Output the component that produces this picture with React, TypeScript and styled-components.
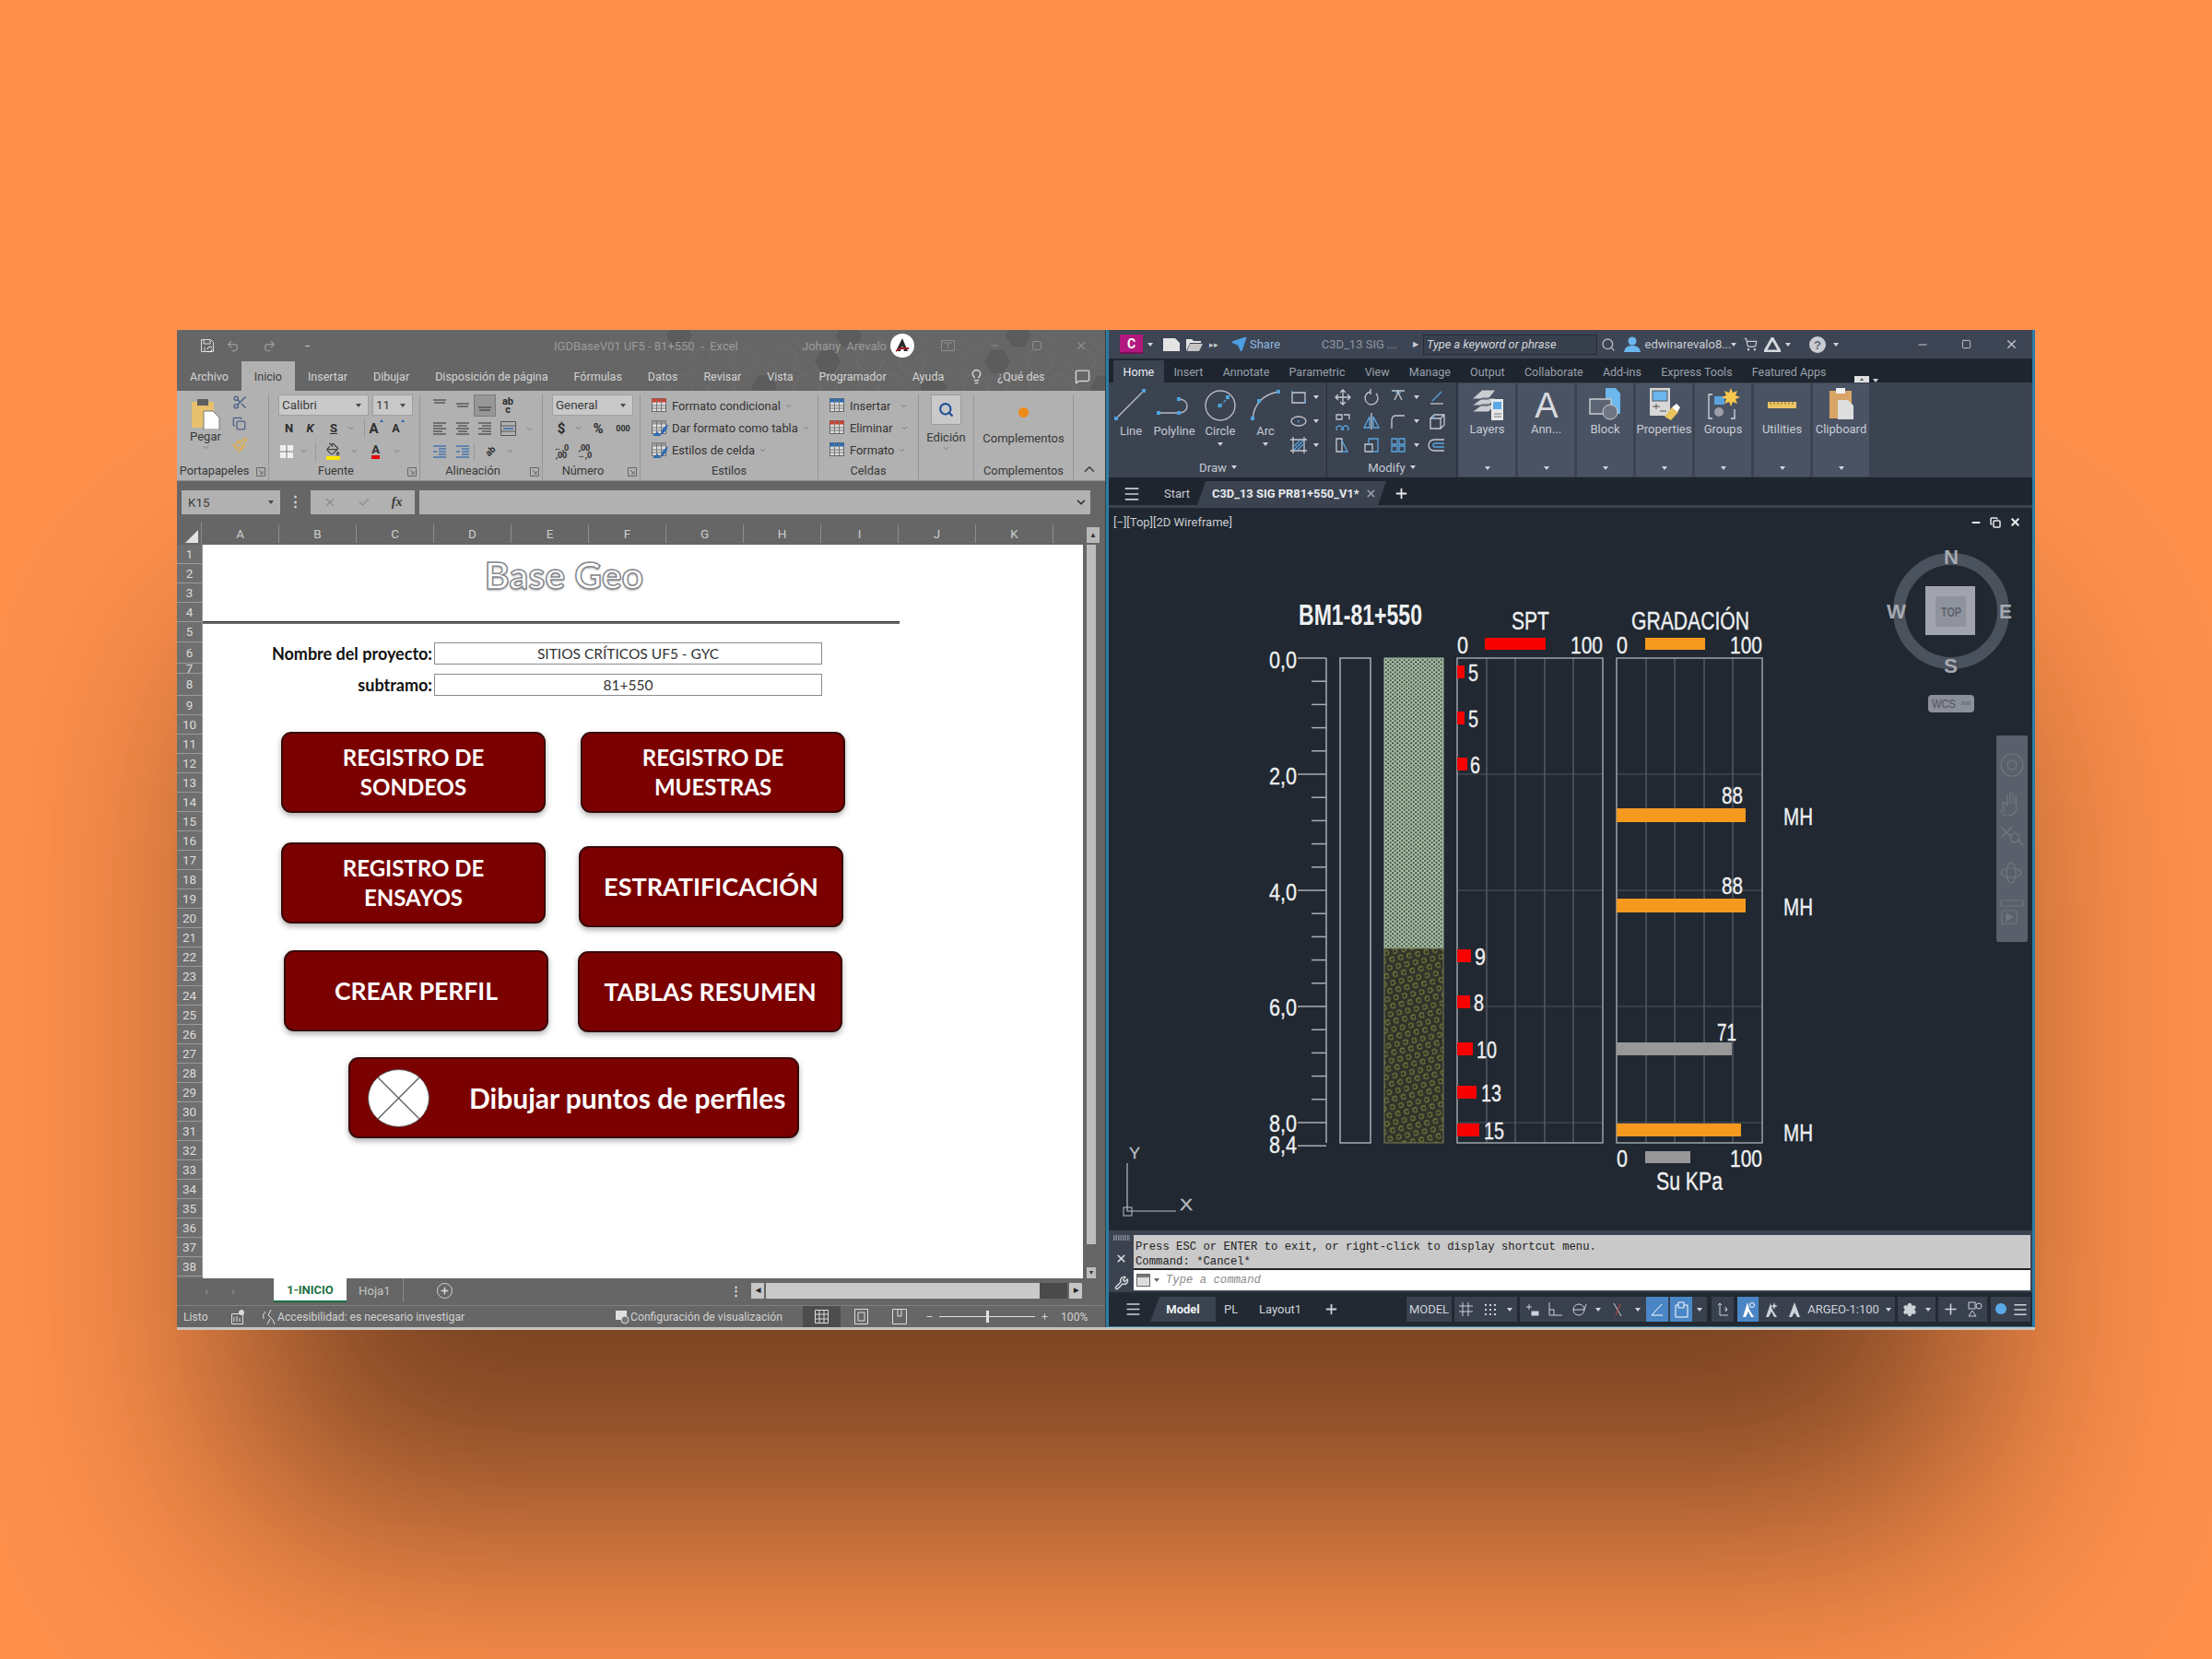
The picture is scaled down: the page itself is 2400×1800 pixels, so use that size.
import React from "react";
import styled, { createGlobalStyle } from "styled-components";
import {
  Undo2, Redo2, Scissors, Lightbulb, MessageSquare, ChevronDown, ChevronUp, Search, X, Check, Minus, Square,
  Plus, Menu, Settings, ShoppingCart, Send, Wrench, Copy, Paintbrush, PaintBucket,
} from "lucide-react";

const GlobalStyle = createGlobalStyle`
  html, body { margin: 0; padding: 0; background: #ff914d; }
  * { box-sizing: border-box; }
`;

const Page = styled.div`
  width: 2400px;
  height: 1800px;
  padding: 358px 0 0 192px;
  background: #ff914d;
  overflow: hidden;
`;

const Desktop = styled.div`
  display: flex;
  width: 2016px;
  height: 1082px;
  background: #3a3a3a;
  box-shadow: 0 3px 0 #c9c4bd, 0 275px 260px -70px rgba(40, 20, 10, 0.64);
`;

/* ---------- Excel ---------- */

const Excel = styled.section`
  position: relative;
  display: flex;
  flex-direction: column;
  width: 1007px;
  background: #666;
  color: #333;
  font-family: "Roboto", sans-serif;
`;

const HexBackdrop = styled.svg`
  position: absolute;
  top: 0;
  right: 0;
  pointer-events: none;
`;

const XlTitle = styled.header`
  position: relative;
  display: flex;
  align-items: center;
  height: 34px;
  padding-left: 24px;
  color: #9c9c9c;
  font-size: 13px;
`;

const TitleIcon = styled.span<{ $w: number; $ml?: number }>`
  display: flex;
  justify-content: center;
  align-items: center;
  flex: none;
  width: ${(p) => p.$w}px;
  margin-left: ${(p) => p.$ml ?? 0}px;
`;

const XlDocName = styled.span<{ $ml: number; $w: number }>`
  margin-left: ${(p) => p.$ml}px;
  width: ${(p) => p.$w}px;
  white-space: pre;
  flex: none;
`;

const Avatar = styled.svg`
  flex: none;
`;

const XlTabs = styled.nav`
  position: relative;
  display: flex;
  align-items: stretch;
  height: 32px;
  padding-right: 16px;
`;

const XlTab = styled.span<{ $active?: boolean }>`
  display: flex;
  align-items: center;
  padding: 0 14px;
  font-size: 12.5px;
  color: ${(p) => (p.$active ? "#3d3d3d" : "#d4d4d4")};
  background: ${(p) => (p.$active ? "#b1b1b1" : "transparent")};
  white-space: nowrap;
`;

const XlTabIcon = styled.span<{ $ml?: number; $push?: boolean }>`
  display: flex;
  align-items: center;
  margin-left: ${(p) => (p.$push ? "auto" : `${p.$ml ?? 0}px`)};
  color: #d6d6d6;
`;

const XlRibbon = styled.div`
  display: flex;
  height: 98px;
  background: #b1b1b1;
  border-bottom: 1px solid #8e8e8e;
`;

const XlGroup = styled.div<{ $w: number }>`
  position: relative;
  display: flex;
  flex-direction: column;
  flex: none;
  width: ${(p) => p.$w}px;
  margin: 4px 0 0;
  padding-bottom: 1px;
  border-right: 1px solid #969696;
`;

const GroupBody = styled.div<{ $pl?: number }>`
  flex: 1;
  display: flex;
  flex-direction: column;
  padding-left: ${(p) => p.$pl ?? 0}px;
`;

const GroupLabel = styled.div<{ $pr?: number }>`
  height: 18px;
  line-height: 17px;
  padding-right: ${(p) => p.$pr ?? 0}px;
  text-align: center;
  font-size: 12.8px;
  color: #383838;
  white-space: nowrap;
`;

const Launcher = styled.svg`
  position: absolute;
  right: 3px;
  bottom: 4px;
`;

const Row = styled.div<{ $h: number }>`
  display: flex;
  align-items: center;
  height: ${(p) => p.$h}px;
`;

const Cell = styled.span<{ $w: number; $active?: boolean; $fs?: number; $lh?: number }>`
  display: flex;
  align-items: center;
  justify-content: center;
  flex: none;
  width: ${(p) => p.$w}px;
  height: 100%;
  font-size: ${(p) => p.$fs ?? 13}px;
  line-height: ${(p) => (p.$lh ? `${p.$lh}px` : "normal")};
  text-align: center;
  font-weight: 700;
  color: #2d2d2d;
  background: ${(p) => (p.$active ? "#979797" : "transparent")};
  border: ${(p) => (p.$active ? "1px solid #7b7b7b" : "none")};
`;

const TiltedCell = styled(Cell)`
  transform: rotate(-45deg);
`;

const GrowCaret = styled.i`
  align-self: flex-start;
  width: 0;
  height: 0;
  margin: 4px 0 0 1px;
  border-left: 2.5px solid transparent;
  border-right: 2.5px solid transparent;
  border-bottom: 3px solid #2a66ad;
`;

const Combo = styled.div<{ $w: number }>`
  display: flex;
  align-items: center;
  justify-content: space-between;
  flex: none;
  width: ${(p) => p.$w}px;
  height: 23px;
  margin-right: 4px;
  padding: 0 7px 0 3px;
  background: #c9c9c9;
  border: 1px solid #9f9f9f;
  font-size: 13.4px;
  color: #3b3b3b;
`;

const ComboCaret = styled.i`
  width: 0;
  height: 0;
  border-left: 3px solid transparent;
  border-right: 3px solid transparent;
  border-top: 4px solid #4a4a4a;
`;

const Chevron = styled(ChevronDown)<{ $ml?: number }>`
  flex: none;
  margin-left: ${(p) => p.$ml ?? 0}px;
  color: #6a6a6a;
`;

const RowSep = styled.i<{ $ml?: number }>`
  flex: none;
  width: 1px;
  height: 20px;
  margin-left: ${(p) => p.$ml ?? 0}px;
  background: #989898;
`;

const PasteColumn = styled.div`
  display: flex;
  flex-direction: column;
  align-items: center;
  width: 58px;
  padding-top: 4px;
  font-size: 13px;
  color: #383838;
`;

const ClipRow = styled.div`
  flex: 1;
  display: flex;
  padding-left: 2px;
`;

const ClipTools = styled.div`
  display: flex;
  flex-direction: column;
  gap: 7px;
  color: #4a5f88;
`;

const ColorMark = styled.span<{ $color: string }>`
  display: flex;
  justify-content: center;
  line-height: 13px;
  border-bottom: 4px solid ${(p) => p.$color};
`;

const ListLine = styled.div`
  display: flex;
  align-items: center;
  height: 24px;
  font-size: 12.9px;
  color: #333;
  white-space: nowrap;
  svg:first-child { flex: none; margin-right: 3px; }
`;

const Big = styled.div`
  display: flex;
  flex-direction: column;
  align-items: center;
  flex: 1;
  font-size: 13px;
  color: #383838;
`;

const SearchTile = styled.div`
  display: flex;
  align-items: center;
  justify-content: center;
  width: 33px;
  height: 33px;
  margin-bottom: 6px;
  background: #c9c9c9;
  border: 1px solid #9c9c9c;
  color: #22509a;
`;

const AddinDot = styled.i`
  width: 11px;
  height: 11px;
  margin: 14px 0 15px;
  border-radius: 50%;
  background: #ef8a17;
`;

const Collapse = styled.span`
  display: flex;
  align-items: flex-end;
  padding: 0 0 3px 8px;
  color: #3f3f3f;
`;

const FormulaRow = styled.div`
  display: flex;
  align-items: flex-start;
  height: 45px;
  padding: 10px 16px 0 5px;
`;

const NameBox = styled.div`
  display: flex;
  align-items: center;
  justify-content: space-between;
  width: 107px;
  height: 26px;
  padding: 0 7px;
  background: #b1b1b1;
  font-size: 13.4px;
  color: #3d3d3d;
`;

const FormulaGrip = styled.span`
  display: flex;
  justify-content: center;
  width: 33px;
  font-size: 15px;
  line-height: 24px;
  font-weight: 700;
  color: #d8d8d8;
`;

const FxBox = styled.div`
  display: flex;
  align-items: center;
  justify-content: space-around;
  width: 113px;
  height: 26px;
  padding: 0 2px;
  margin-right: 5px;
  background: #b1b1b1;
  color: #8a8a8a;
`;

const FxMark = styled.i`
  font-family: "Liberation Serif", serif;
  font-weight: 700;
  font-size: 14px;
  color: #3a3a3a;
`;

const FormulaBox = styled.div`
  flex: 1;
  display: flex;
  align-items: center;
  justify-content: flex-end;
  height: 26px;
  padding-right: 3px;
  background: #b1b1b1;
  color: #3a3a3a;
`;

const FormulaChevron = styled(ChevronDown)`
  color: #333;
`;

const ColHeads = styled.div`
  display: flex;
  height: 24px;
`;

const Corner = styled.div`
  display: flex;
  align-items: flex-end;
  justify-content: flex-end;
  width: 27px;
  padding: 0 3px 2px 0;
  border-right: 1px solid #8d8d8d;
`;

const ColHead = styled.div`
  width: 84px;
  display: flex;
  align-items: center;
  justify-content: center;
  border-right: 1px solid #8d8d8d;
  font-size: 13.4px;
  color: #cfcfcf;
  margin: 2px 0;
`;

const ScrollEnd = styled.div`
  display: flex;
  align-items: center;
  justify-content: center;
  width: 14px;
  height: 17px;
  margin: 5px 0 0 36px;
  background: #b9b9b9;
  font-size: 8px;
  color: #333;
`;

const SheetArea = styled.div`
  display: flex;
  height: 796px;
`;

const RowHeads = styled.div`
  width: 28px;
  flex: none;
  background: #6f6f6f;
`;

const RowHead = styled.div<{ $h: number }>`
  display: flex;
  align-items: center;
  justify-content: center;
  height: ${(p) => p.$h}px;
  overflow: hidden;
  border-bottom: 1px solid #9a9a9a;
  border-right: 1px solid #9a9a9a;
  font-size: 13.4px;
  color: #dcdcdc;
`;

const Sheet = styled.div`
  width: 955px;
  flex: none;
  background: #fff;
  overflow: hidden;
`;

const SheetTitle = styled.h1`
  width: 784px;
  height: 83px;
  margin: 0;
  padding-top: 8px;
  text-align: center;
  font-family: "Lato", sans-serif;
  font-size: 41px;
  line-height: 50px;
  font-weight: 700;
  color: #fff;
  -webkit-text-stroke: 1.5px #85878c;
  text-shadow: 0 2px 2px rgba(0, 0, 0, 0.25);
`;

const Rule = styled.div`
  width: 756px;
  height: 3px;
  background: #6a6a6a;
  border-top: 1px solid #333;
`;

const Fields = styled.div`
  display: grid;
  grid-template-columns: 249px 421px;
  column-gap: 2px;
  row-gap: 10px;
  margin-top: 20px;
`;

const FieldLabel = styled.label`
  display: flex;
  align-items: center;
  justify-content: flex-end;
  height: 24px;
  font-family: "Lato", sans-serif;
  font-weight: 700;
  font-size: 18px;
  color: #111;
`;

const FieldValue = styled.div`
  height: 24px;
  line-height: 22px;
  text-align: center;
  border: 1px solid #8a8a8a;
  font-family: "Lato", sans-serif;
  font-size: 15.5px;
  color: #333;
`;

const ShapeRow = styled.div<{ $mt: number; $ml: number; $gap?: number }>`
  display: flex;
  align-items: flex-start;
  gap: ${(p) => p.$gap ?? 0}px;
  margin: ${(p) => p.$mt}px 0 0 ${(p) => p.$ml}px;
`;

const ShapeButton = styled.button<{ $w?: number; $mt?: number; $size?: number }>`
  display: flex;
  align-items: center;
  justify-content: center;
  flex: none;
  width: ${(p) => p.$w ?? 287}px;
  height: 88px;
  margin-top: ${(p) => p.$mt ?? 0}px;
  padding: 0;
  background: #7b0000;
  border: 2px solid #3a0808;
  border-radius: 11px;
  box-shadow: 0 3px 6px rgba(0, 0, 0, 0.32);
  font-family: "Lato", sans-serif;
  font-weight: 700;
  font-size: ${(p) => p.$size ?? 24}px;
  line-height: 32px;
  color: #fff;
`;

const PointsButton = styled(ShapeButton)`
  justify-content: flex-start;
  padding-left: 19px;
  gap: 43px;
`;

const VScroll = styled.div`
  display: flex;
  flex-direction: column;
  flex: none;
  width: 24px;
  padding: 0 10px 0 4px;
`;

const VThumb = styled.div`
  flex: 1;
  margin-bottom: 37px;
  background: #bdbdbd;
`;

const VDown = styled.div`
  height: 12px;
  margin-top: -12px;
  background: #bdbdbd;
  font-size: 7px;
  line-height: 12px;
  text-align: center;
  color: #333;
`;

const SheetTabs = styled.div`
  display: flex;
  align-items: flex-start;
  height: 29px;
  color: #c4c4c4;
  font-size: 13.2px;
`;

const SheetNav = styled.span`
  display: flex;
  justify-content: space-between;
  width: 105px;
  height: 26px;
  padding: 0 42px 0 30px;
  align-items: center;
  font-size: 13px;
  color: #999;
`;

const ActiveSheet = styled.span`
  display: flex;
  align-items: center;
  justify-content: center;
  width: 79px;
  height: 26px;
  background: #fff;
  border-bottom: 2px solid #1d6f42;
  font-weight: 700;
  font-size: 13px;
  color: #1d6f42;
`;

const OtherSheet = styled.span`
  display: flex;
  align-items: center;
  width: 62px;
  height: 26px;
  padding-left: 13px;
  border-right: 1px solid #8a8a8a;
`;

const AddSheet = styled.span`
  display: flex;
  align-items: center;
  justify-content: center;
  flex: none;
  width: 17px;
  height: 17px;
  margin: 5px 0 0 36px;
  border: 1.5px solid #d0d0d0;
  border-radius: 50%;
  color: #e0e0e0;
`;

const HScroll = styled.div`
  display: flex;
  align-items: center;
  height: 26px;
  margin-left: 301px;
  font-weight: 700;
  color: #ddd;
`;

const HBtn = styled.span<{ $ml: number }>`
  display: flex;
  align-items: center;
  justify-content: center;
  flex: none;
  width: 14px;
  height: 17px;
  margin-left: ${(p) => p.$ml}px;
  background: #c6c6c6;
  font-size: 7px;
  color: #222;
`;

const HTrack = styled.span`
  display: block;
  flex: none;
  width: 327px;
  height: 17px;
  margin-left: 2px;
  background: #c9c9c9;
  border-right: 30px solid #4a4a4a;
`;

const XlStatus = styled.footer`
  display: flex;
  align-items: center;
  height: 24px;
  padding-left: 7px;
  border-top: 1px solid #7f7f7f;
  font-size: 12.2px;
  color: #d2d2d2;
  white-space: nowrap;
`;

const StatusChip = styled.span<{ $ml?: number; $w?: number; $active?: boolean; $left?: boolean }>`
  display: flex;
  align-items: center;
  justify-content: ${(p) => (p.$w && !p.$left ? "center" : "flex-start")};
  gap: 1px;
  flex: none;
  margin-left: ${(p) => p.$ml ?? 0}px;
  width: ${(p) => (p.$w ? `${p.$w}px` : "auto")};
  height: 100%;
  background: ${(p) => (p.$active ? "#4d4d4d" : "transparent")};
`;

const ZoomTrack = styled.span`
  position: relative;
  display: block;
  flex: none;
  width: 104px;
  height: 1px;
  margin-left: 6px;
  background: #ddd;
  &::after {
    content: "";
    position: absolute;
    left: 51px;
    top: -6px;
    width: 3px;
    height: 13px;
    background: #e4e4e4;
  }
`;

/* ---------- AutoCAD ---------- */

const Cad = styled.section`
  display: flex;
  flex-direction: column;
  width: 1008px;
  margin-left: 1px;
  background: #222932;
  border-left: 3px solid #2b7da6;
  border-right: 3px solid #2b7da6;
  border-bottom: 1px solid #2b7da6;
  font-family: "Roboto", sans-serif;
  color: #c3c8d2;
`;

const CadTitle = styled.header`
  display: flex;
  align-items: center;
  flex: none;
  height: 31px;
  background: #3d4554;
  font-size: 13px;
`;

const CadSlot = styled.span<{ $ml: number; $w?: number; $color?: string; $fs?: number }>`
  display: flex;
  align-items: center;
  justify-content: ${(p) => (p.$w ? "center" : "flex-start")};
  flex: none;
  margin-left: ${(p) => p.$ml}px;
  width: ${(p) => (p.$w ? `${p.$w}px` : "auto")};
  color: ${(p) => p.$color ?? "#c9ccd2"};
  font-size: ${(p) => (p.$fs ? `${p.$fs}px` : "inherit")};
  white-space: nowrap;
`;

const AppMark = styled.span`
  display: flex;
  align-items: center;
  justify-content: center;
  flex: none;
  width: 25px;
  height: 21px;
  margin-left: 12px;
  background: #b3187f;
  border-bottom: 2px solid #7c0f5a;
  color: #fff;
  font-weight: 700;
  font-size: 14px;
`;

const KeywordBox = styled.span`
  display: flex;
  align-items: center;
  flex: none;
  width: 189px;
  height: 22px;
  margin-left: 5px;
  padding-left: 3px;
  background: #383f4d;
  border: 1px solid #252b35;
  font-style: italic;
  font-size: 12.8px;
  color: #d3d6dc;
`;

const CadTabs = styled.nav`
  display: flex;
  align-items: flex-end;
  flex: none;
  height: 26px;
  padding-left: 5px;
  background: #1f252e;
`;

const CadTab = styled.span<{ $active?: boolean }>`
  display: flex;
  align-items: center;
  height: 24px;
  padding: 0 10.6px;
  font-size: 12.5px;
  white-space: nowrap;
  color: ${(p) => (p.$active ? "#eceef2" : "#99a1ad")};
  background: ${(p) => (p.$active ? "#3b4351" : "transparent")};
`;

const CadRibbon = styled.div`
  display: flex;
  flex: none;
  height: 103px;
  padding-left: 1px;
  background: #3b4351;
`;

const DrawPanel = styled.div<{ $w: number }>`
  display: flex;
  flex-direction: column;
  flex: none;
  width: ${(p) => p.$w}px;
  border-right: 1px solid #272d38;
`;

const DrawTools = styled.div`
  flex: 1;
  display: flex;
`;

const DrawLabel = styled.div`
  display: flex;
  align-items: center;
  justify-content: center;
  gap: 5px;
  height: 22px;
  font-size: 13.2px;
  color: #c3c8d2;
`;

const LargeTool = styled.div<{ $w: number }>`
  display: flex;
  flex-direction: column;
  align-items: center;
  flex: none;
  width: ${(p) => p.$w}px;
  padding-top: 5px;
  font-size: 13px;
  line-height: 16px;
  color: #c3c8d2;
`;

const ToolGrid = styled.div<{ $cols: string; $pl?: number }>`
  display: grid;
  grid-template-columns: ${(p) => p.$cols};
  grid-auto-rows: 26px;
  align-items: center;
  justify-items: center;
  padding: 3px 0 0 ${(p) => p.$pl ?? 0}px;
`;

const Tri = styled.i<{ $color?: string; $mr?: number }>`
  display: block;
  width: 0;
  height: 0;
  margin-right: ${(p) => p.$mr ?? 0}px;
  border-left: 3.5px solid transparent;
  border-right: 3.5px solid transparent;
  border-top: 4px solid ${(p) => p.$color ?? "#d0d4da"};
`;

const ToolTri = styled(Tri)`
  margin-top: 4px;
`;

const SidePanel = styled.div<{ $ml?: number }>`
  display: flex;
  flex-direction: column;
  align-items: center;
  flex: none;
  width: 61px;
  margin: 1px 3px 1px ${(p) => p.$ml ?? 0}px;
  padding-top: 4px;
  background: #4a5364;
  font-size: 13px;
  color: #c8ccd4;
`;

const SideName = styled.span`
  margin-top: 2px;
  flex: 1;
`;

const SideArrow = styled(Tri)`
  margin-bottom: 7px;
`;

const DocTabs = styled.div`
  display: flex;
  align-items: flex-end;
  flex: none;
  height: 30px;
  padding-left: 15px;
  background: #1f252e;
  color: #c7cbd2;
  font-size: 13px;
`;

const DocItem = styled.span<{ $ml?: number }>`
  display: flex;
  align-items: center;
  height: 25px;
  margin-left: ${(p) => p.$ml ?? 0}px;
  white-space: nowrap;
`;

const ActiveDoc = styled.span`
  display: flex;
  align-items: center;
  justify-content: space-between;
  width: 205px;
  height: 26px;
  margin-left: 8px;
  padding: 0 10px 0 16px;
  background: #3b4351;
  clip-path: polygon(9px 0, 100% 0, calc(100% - 9px) 100%, 0 100%);
  font-weight: 700;
  font-size: 12.9px;
  color: #e8eaee;
`;

const DocStrip = styled.div`
  flex: none;
  height: 3px;
  background: #3b4351;
`;

const Canvas = styled.div`
  position: relative;
  flex: none;
  height: 784px;
  background: #212831;
`;

const CanvasDrawing = styled.svg`
  display: block;
`;

const ViewTag = styled.span`
  position: absolute;
  left: 5px;
  top: 8px;
  font-size: 13px;
  color: #c9ccd2;
`;

const ViewControls = styled.span`
  position: absolute;
  right: 12px;
  top: 9px;
  display: flex;
  align-items: center;
  gap: 9px;
  color: #e7e8ea;
`;

const Command = styled.div`
  display: flex;
  flex: none;
  height: 67px;
  padding: 5px 2px 2px 0;
  background: #3b4351;
`;

const CommandGrips = styled.div`
  display: flex;
  flex-direction: column;
  align-items: center;
  justify-content: space-between;
  width: 27px;
  color: #dfe2e6;
`;

const CommandBody = styled.div`
  flex: 1;
  display: flex;
  flex-direction: column;
`;

const CommandHistory = styled.div`
  height: 38px;
  padding: 5px 2px 0;
  background: #c9c9c9;
  border-bottom: 2px solid #222;
  font-family: "Liberation Mono", monospace;
  font-size: 12.25px;
  line-height: 16px;
  color: #222;
`;

const CommandInput = styled.div`
  flex: 1;
  display: flex;
  align-items: center;
  gap: 4px;
  padding-left: 3px;
  background: #fff;
  font-family: "Liberation Mono", monospace;
  font-style: italic;
  font-size: 12.25px;
  color: #8a8a8a;
`;

const CadStatus = styled.footer`
  display: flex;
  align-items: center;
  flex: none;
  height: 37px;
  padding-left: 17px;
  background: #222932;
  font-size: 13px;
  color: #cdd1d8;
  white-space: nowrap;
`;

const ModelTab = styled.span`
  display: flex;
  align-items: center;
  justify-content: center;
  flex: none;
  width: 71px;
  height: 27px;
  margin-left: 9px;
  background: #3b4351;
  clip-path: polygon(10px 0, 100% 0, 100% 100%, 0 100%);
  font-weight: 700;
  color: #eef0f3;
`;

const StatusLink = styled.span<{ $ml: number; $w: number }>`
  display: flex;
  align-items: center;
  flex: none;
  width: ${(p) => p.$w}px;
  margin-left: ${(p) => p.$ml}px;
`;

const StatusGroup = styled.span<{ $ml: number }>`
  display: flex;
  align-items: center;
  flex: none;
  height: 27px;
  margin-left: ${(p) => p.$ml}px;
  background: #39414f;
`;

const StatusBtn = styled.span<{ $w: number; $active?: boolean }>`
  display: flex;
  align-items: center;
  justify-content: center;
  flex: none;
  width: ${(p) => p.$w}px;
  height: 100%;
  background: ${(p) => (p.$active ? "#4a86c5" : "transparent")};
  color: ${(p) => (p.$active ? "#fff" : "#cdd1d8")};
`;

const StatusGap = styled.i<{ $w: number }>`
  flex: none;
  width: ${(p) => p.$w}px;
  height: 100%;
  background: #222932;
`;

/* ---------- data ---------- */

const ROW_HEIGHTS: [number, number][] = [
  [1, 21], [2, 21], [3, 21], [4, 21], [5, 22], [6, 23], [7, 11], [8, 24],
  ...Array.from({ length: 30 }, (_, i) => [i + 9, 21] as [number, number]),
];
const COLUMNS = ["A", "B", "C", "D", "E", "F", "G", "H", "I", "J", "K"];
const XL_TABS = ["Archivo", "Inicio", "Insertar", "Dibujar", "Disposición de página", "Fórmulas", "Datos", "Revisar", "Vista", "Programador", "Ayuda"];
const CAD_TABS = ["Home", "Insert", "Annotate", "Parametric", "View", "Manage", "Output", "Collaborate", "Add-ins", "Express Tools", "Featured Apps"];
const TICKS = Array.from({ length: 22 }, (_, i) => 714 + i * 25.2);
const SPT_BARS = [
  { v: "5", top: 722, right: 1589, lx: 1593, w: 11 },
  { v: "5", top: 772, right: 1589, lx: 1593, w: 11 },
  { v: "6", top: 822, right: 1592, lx: 1595, w: 11 },
  { v: "9", top: 1030, right: 1596, lx: 1600, w: 12 },
  { v: "8", top: 1080, right: 1595, lx: 1599, w: 11 },
  { v: "10", top: 1131, right: 1598, lx: 1602, w: 22 },
  { v: "13", top: 1178, right: 1602, lx: 1607, w: 22 },
  { v: "15", top: 1219, right: 1605, lx: 1610, w: 22 },
];
const DEPTHS = [["0,0", 725], ["2,0", 851], ["4,0", 977], ["6,0", 1102], ["8,0", 1228], ["8,4", 1251]] as const;

/* ---------- small drawings ---------- */

const Bars = ({ rows, color = "#444", size = 18 }: { rows: [number, number, number][]; color?: string; size?: number }) => (
  <svg width={size} height={size} viewBox="0 0 18 18">
    {rows.map(([y, a, b], i) => (
      <path key={i} d={`M${a} ${y}H${b}`} stroke={color} strokeWidth="1.2" />
    ))}
  </svg>
);

const Launch = () => (
  <Launcher width="10" height="10" viewBox="0 0 10 10">
    <path d="M.5 9.5V.5h9v9zM3 3l4 4M7 4v3H4" fill="none" stroke="#666" />
  </Launcher>
);

const TableIcon = ({ accent = "#c43", brush = false }: { accent?: string; brush?: boolean }) => (
  <svg width="19" height="19" viewBox="0 0 19 19">
    <rect x=".5" y="1.5" width="15" height="14" fill="#ddd" stroke="#666" />
    <rect x=".5" y="1.5" width="15" height="4" fill={accent} />
    <path d="M5.5 2v13M10.5 2v13M1 9h14M1 12h14" stroke="#777" />
    {brush && <path d="M9 18l3-8 6-5-2 7z" fill="#2f6cb2" />}
    {brush && <path d="M1 18l5-5 4 5z" fill="#2f6cb2" />}
  </svg>
);

const Line = () => (
  <svg width="40" height="40" viewBox="0 0 40 40">
    <path d="M4 34L34 4" stroke="#b6bcc6" strokeWidth="1.4" />
    <rect x="2" y="32" width="4" height="4" fill="#4fa3dd" />
    <rect x="32" y="2" width="4" height="4" fill="#4fa3dd" />
  </svg>
);
const Polyline = () => (
  <svg width="42" height="40" viewBox="0 0 42 40">
    <path d="M4 28h22c12 0 12-15 0-15" fill="none" stroke="#b6bcc6" strokeWidth="1.4" />
    <rect x="2" y="26" width="4" height="4" fill="#4fa3dd" />
    <rect x="24" y="26" width="4" height="4" fill="#4fa3dd" />
    <rect x="24" y="11" width="4" height="4" fill="#4fa3dd" />
  </svg>
);
const Circle = () => (
  <svg width="40" height="40" viewBox="0 0 40 40">
    <circle cx="20" cy="20" r="16" fill="none" stroke="#b6bcc6" strokeWidth="1.4" />
    <path d="M20 20l10-10" stroke="#4fa3dd" strokeDasharray="3 2" strokeWidth="1.4" />
    <rect x="17.5" y="18" width="4" height="4" fill="#4fa3dd" />
    <rect x="26" y="9" width="4" height="4" fill="#4fa3dd" />
  </svg>
);
const Arc = () => (
  <svg width="40" height="40" viewBox="0 0 40 40">
    <path d="M6 34C8 18 18 8 34 5" fill="none" stroke="#b6bcc6" strokeWidth="1.4" />
    <rect x="4" y="32" width="4" height="4" fill="#4fa3dd" />
    <rect x="11" y="13" width="4" height="4" fill="#4fa3dd" />
    <rect x="32" y="3" width="4" height="4" fill="#4fa3dd" />
  </svg>
);
const Tool = ({ d, blue }: { d: string; blue?: string }) => (
  <svg width="20" height="20" viewBox="0 0 20 20" fill="none" strokeWidth="1.3">
    <path d={d} stroke="#c5c9d0" />
    {blue && <path d={blue} stroke="#59a6e0" />}
  </svg>
);

const HexBand = () => {
  const cells: React.ReactNode[] = [];
  for (let c = 0; c < 11; c++) {
    for (let r = 0; r < 3; r++) {
      const x = 18 + c * 46 + (r % 2) * 23;
      const y = 6 + r * 28;
      const pts = `${x - 15},${y} ${x - 7},${y - 13} ${x + 7},${y - 13} ${x + 15},${y} ${x + 7},${y + 13} ${x - 7},${y + 13}`;
      cells.push(<polygon key={`${c}-${r}`} points={pts} fill={(c + r) % 4 === 0 ? "rgba(0,0,0,.09)" : "none"} stroke="rgba(255,255,255,.05)" />);
    }
  }
  return (
    <HexBackdrop width="480" height="66" viewBox="0 0 480 66">
      {cells}
    </HexBackdrop>
  );
};

type LabelProps = { x: number; y: number; w: number; size?: number; bold?: boolean; fill?: string; children: string };

// chart lettering: the CAD font is narrower than Arial, so each string is fitted to its measured width
const Lbl = ({ x, y, w, size = 26, bold, fill = "#eef0f2", children }: LabelProps) => (
  <text
    x={x}
    y={y}
    fontFamily='"Liberation Sans", sans-serif'
    fontSize={size}
    fontWeight={bold ? 700 : 400}
    fill={fill}
    stroke={fill}
    strokeWidth={bold ? 0 : 0.35}
    textLength={w}
    lengthAdjust="spacingAndGlyphs"
  >
    {children}
  </text>
);

const Profile = () => (
  <CanvasDrawing width="1002" height="784" viewBox="1203 551 1002 784">
    <defs>
      <pattern id="silt" width="5" height="4.4" patternUnits="userSpaceOnUse">
        <rect width="5" height="4.4" fill="#a9c2a6" />
        <circle cx="1.2" cy="1.1" r="1.05" fill="#3a4740" />
        <circle cx="3.7" cy="3.3" r="1.05" fill="#3a4740" />
      </pattern>
      <pattern id="gravel" width="9.5" height="16.5" patternUnits="userSpaceOnUse" patternTransform="rotate(-12)">
        <rect width="9.5" height="16.5" fill="#30342a" />
        <circle cx="2.4" cy="4" r="2.5" fill="none" stroke="#74773a" strokeWidth="1.3" />
        <circle cx="7.15" cy="12.2" r="2.5" fill="none" stroke="#74773a" strokeWidth="1.3" />
      </pattern>
    </defs>

    {/* depth axis */}
    <path d="M1439 714V1240" stroke="#a9aeb6" strokeWidth="1.5" />
    {TICKS.map((y, i) => (
      <path key={y} d={`M${i % 5 === 0 || y > 1238 ? 1408 : 1423} ${y}H1439`} stroke="#a9aeb6" strokeWidth="1.5" />
    ))}
    {DEPTHS.map(([t, y]) => (
      <Lbl key={t} x={1377} y={y} w={30}>{t}</Lbl>
    ))}

    <Lbl x={1409} y={678} w={134} size={31} bold>BM1-81+550</Lbl>
    <rect x="1454" y="714" width="33" height="526" fill="none" stroke="#a9aeb6" strokeWidth="1.5" />
    <rect x="1502" y="714" width="64" height="315" fill="url(#silt)" stroke="#a8bda6" />
    <rect x="1502" y="1029" width="64" height="211" fill="url(#gravel)" stroke="#7b7d55" />

    {/* SPT and grading grids */}
    {[0, 173].map((dx) => (
      <g key={dx}>
        {[32, 63, 95, 126].map((x) => (
          <path key={x} d={`M${1581 + dx + x} 714V1240`} stroke="#5f6670" strokeWidth="1.2" />
        ))}
        {[840, 966, 1092, 1218].map((y) => (
          <path key={y} d={`M${1581 + dx} ${y}H${1739 + dx}`} stroke="#4f565f" strokeWidth="1.2" />
        ))}
        <rect x={1581 + dx} y="714" width="158" height="526" fill="none" stroke="#9ca2aa" strokeWidth="1.5" />
      </g>
    ))}

    <Lbl x={1640} y={683} w={41} size={27}>SPT</Lbl>
    <Lbl x={1770} y={683} w={128} size={27}>GRADACIÓN</Lbl>
    <Lbl x={1581} y={709} w={12}>0</Lbl>
    <rect x="1611" y="692" width="66" height="13" fill="#f80000" />
    <Lbl x={1704} y={709} w={35}>100</Lbl>
    <Lbl x={1754} y={709} w={12}>0</Lbl>
    <rect x="1785" y="692" width="65" height="13" fill="#f59a1f" />
    <Lbl x={1877} y={709} w={35}>100</Lbl>

    {SPT_BARS.map((b) => (
      <g key={b.top}>
        <rect x="1581" y={b.top} width={b.right - 1581} height="14" fill="#f80000" />
        <Lbl x={b.lx} y={b.top + 17} w={b.w}>{b.v}</Lbl>
      </g>
    ))}

    <rect x="1754" y="877" width="140" height="15" fill="#f59a1f" />
    <Lbl x={1868} y={872} w={23} size={25}>88</Lbl>
    <Lbl x={1935} y={895} w={32}>MH</Lbl>
    <rect x="1754" y="975" width="140" height="15" fill="#f59a1f" />
    <Lbl x={1868} y={970} w={23} size={25}>88</Lbl>
    <Lbl x={1935} y={993} w={32}>MH</Lbl>
    <rect x="1754" y="1131" width="125" height="14" fill="#989898" />
    <Lbl x={1863} y={1129} w={21} size={25}>71</Lbl>
    <rect x="1754" y="1219" width="135" height="14" fill="#f59a1f" />
    <Lbl x={1935} y={1238} w={32}>MH</Lbl>

    <Lbl x={1754} y={1266} w={12}>0</Lbl>
    <rect x="1785" y="1249" width="49" height="13" fill="#989898" />
    <Lbl x={1877} y={1266} w={35}>100</Lbl>
    <Lbl x={1797} y={1291} w={72} size={27}>Su KPa</Lbl>

    {/* UCS icon */}
    <path d="M1223 1262V1314H1276" fill="none" stroke="#b9bdc4" strokeWidth="1.2" />
    <rect x="1219" y="1310" width="9" height="9" fill="none" stroke="#b9bdc4" />
    <Lbl x={1225} y={1257} w={12} size={17} fill="#b9bdc4">Y</Lbl>
    <Lbl x={1280} y={1313} w={14} size={17} fill="#b9bdc4">X</Lbl>

    {/* view cube */}
    <circle cx="2117" cy="663" r="56.5" fill="none" stroke="#4a525e" strokeWidth="13" />
    <rect x="2089" y="636" width="54" height="53" fill="#a1a4ac" />
    <rect x="2100" y="647" width="33" height="33" fill="#8f939d" />
    <Lbl x={2106} y={669} w={22} size={14} bold fill="#5f636d">TOP</Lbl>
    <Lbl x={2109} y={612} w={16} size={22} bold fill="#a5a9b0">N</Lbl>
    <Lbl x={2109} y={730} w={15} size={22} bold fill="#a5a9b0">S</Lbl>
    <Lbl x={2047} y={671} w={21} size={22} bold fill="#a5a9b0">W</Lbl>
    <Lbl x={2169} y={671} w={14} size={22} bold fill="#a5a9b0">E</Lbl>
    <rect x="2092" y="754" width="50" height="19" rx="4" fill="#8b8f99" />
    <Lbl x={2096} y={768} w={26} size={13} fill="#5d616b">WCS</Lbl>
    <path d="M2128 763h10" stroke="#777b85" strokeWidth="4" />

    {/* navigation bar */}
    <rect x="2166" y="798" width="34" height="224" rx="2" fill="#5a606b" />
    <g fill="none" stroke="#71767f" strokeWidth="1.2">
      <circle cx="2183" cy="830" r="12" />
      <circle cx="2183" cy="830" r="5" />
      <path d="M2175 880c-2-8-3-9-1-10l4 4v-12m3 10v-13m3 13v-12m3 12v-9l1 14c-2 6-4 8-10 8s-6-4-7-7" />
      <path d="M2171 897l12 12m0-12l-12 12m18 2l6 6" />
      <circle cx="2186" cy="909" r="5" />
      <ellipse cx="2182" cy="947" rx="11" ry="5" />
      <ellipse cx="2182" cy="947" rx="5" ry="11" />
      <path d="M2171 977h24v6h-24zM2172 988h16v14h-16z" />
      <path d="M2177 991v8l7-4z" fill="#71767f" />
    </g>
  </CanvasDrawing>
);

export default function App() {
  return (
    <Page>
      <GlobalStyle />
      <Desktop>
        <Excel>
          <HexBand />
          <XlTitle>
            <TitleIcon $w={18}>
              <svg width="16" height="16" viewBox="0 0 16 16" fill="none" stroke="#ddd">
                <path d="M1.5 1.5h10l3 3v10h-13z" />
                <path d="M4 2v4h7V2M5 15v-5" />
                <path d="M8 12a3 3 0 0 1 5-2M13 12a3 3 0 0 1-5 2" stroke="#fff" />
              </svg>
            </TitleIcon>
            <TitleIcon $w={34} $ml={1}><Undo2 size={15} /></TitleIcon>
            <TitleIcon $w={8}><Chevron size={8} /></TitleIcon>
            <TitleIcon $w={30}><Redo2 size={15} /></TitleIcon>
            <TitleIcon $w={8}><Chevron size={8} /></TitleIcon>
            <TitleIcon $w={36}><Minus size={7} color="#ddd" strokeWidth={3} /></TitleIcon>
            <XlDocName $ml={250} $w={200}>IGDBaseV01 UF5 - 81+550  -  Excel</XlDocName>
            <XlDocName $ml={69} $w={96}>Johany  Arevalo</XlDocName>
            <Avatar width="26" height="26" viewBox="0 0 26 26">
              <circle cx="13" cy="13" r="13" fill="#fff" />
              <path d="M6 19L13 5l6 14h-4l-2-6-2 6z" fill="#2a2a2a" />
              <path d="M6 19l5-3h9" stroke="#a3212b" strokeWidth="2" fill="none" />
            </Avatar>
            <TitleIcon $w={16} $ml={28}>
              <svg width="15" height="12" viewBox="0 0 15 12" fill="none" stroke="#8d8d8d"><path d="M.5.5h14v11H.5zM3 3h9M7.5 3v6" /></svg>
            </TitleIcon>
            <TitleIcon $w={14} $ml={36}><Minus size={14} color="#8d8d8d" /></TitleIcon>
            <TitleIcon $w={14} $ml={32}><Square size={12} color="#8d8d8d" /></TitleIcon>
            <TitleIcon $w={14} $ml={34}><X size={16} color="#8d8d8d" /></TitleIcon>
          </XlTitle>

          <XlTabs>
            {XL_TABS.map((t) => (
              <XlTab key={t} $active={t === "Inicio"}>{t}</XlTab>
            ))}
            <XlTabIcon $ml={13}><Lightbulb size={17} /></XlTabIcon>
            <XlTab>¿Qué des</XlTab>
            <XlTabIcon $push><MessageSquare size={17} /></XlTabIcon>
          </XlTabs>

          <XlRibbon>
            <XlGroup $w={100}>
              <GroupBody>
                <ClipRow>
                  <PasteColumn>
                    <svg width="33" height="34" viewBox="0 0 33 34">
                      <rect x="1" y="4" width="24" height="28" fill="#e6c06c" />
                      <rect x="7" y="1" width="12" height="7" fill="#5f5f5f" />
                      <path d="M14 14h10l7 7v13H14z" fill="#fff" stroke="#777" />
                    </svg>
                    Pegar
                    <Chevron size={9} />
                  </PasteColumn>
                  <ClipTools>
                    <Scissors size={17} />
                    <Copy size={15} />
                    <Paintbrush size={17} color="#e0b050" />
                  </ClipTools>
                </ClipRow>
              </GroupBody>
              <GroupLabel $pr={18}>Portapapeles</GroupLabel>
              <Launch />
            </XlGroup>

            <XlGroup $w={164}>
              <GroupBody $pl={10}>
                <Row $h={23}>
                  <Combo $w={98}>Calibri<ComboCaret /></Combo>
                  <Combo $w={44}>11<ComboCaret /></Combo>
                </Row>
                <Row $h={27}>
                  <Cell $w={23}>N</Cell>
                  <Cell $w={23}><i>K</i></Cell>
                  <Cell $w={28}><u>S</u></Cell>
                  <Chevron size={9} />
                  <RowSep $ml={10} />
                  <Cell $w={24} $fs={15}>A<GrowCaret /></Cell>
                  <Cell $w={24} $fs={12.5}>A<GrowCaret /></Cell>
                </Row>
                <Row $h={23}>
                  <Cell $w={18}>
                    <svg width="14" height="14" viewBox="0 0 14 14"><rect width="14" height="14" fill="#f0f0f0" /><path d="M7 0v14M0 7h14" stroke="#777" /></svg>
                  </Cell>
                  <Chevron size={9} $ml={5} />
                  <RowSep $ml={8} />
                  <Cell $w={37}>
                    <ColorMark $color="#ffe600"><PaintBucket size={15} color="#444" /></ColorMark>
                  </Cell>
                  <Chevron size={9} />
                  <Cell $w={37}><ColorMark $color="#e80000">A</ColorMark></Cell>
                  <Chevron size={9} />
                </Row>
              </GroupBody>
              <GroupLabel $pr={18}>Fuente</GroupLabel>
              <Launch />
            </XlGroup>

            <XlGroup $w={133}>
              <GroupBody $pl={8}>
                <Row $h={24}>
                  <Cell $w={25}><Bars rows={[[3, 2, 16], [6, 3, 15]]} /></Cell>
                  <Cell $w={25}><Bars rows={[[7, 2, 16], [10, 3, 15]]} /></Cell>
                  <Cell $w={24} $active><Bars rows={[[11, 2, 16], [14, 3, 15]]} /></Cell>
                  <Cell $w={26} $fs={11} $lh={9}>ab<br />c</Cell>
                </Row>
                <Row $h={26}>
                  <Cell $w={25}><Bars rows={[[3, 2, 16], [6, 2, 12], [9, 2, 16], [12, 2, 12], [15, 2, 16]]} /></Cell>
                  <Cell $w={25}><Bars rows={[[3, 2, 16], [6, 4, 14], [9, 2, 16], [12, 4, 14], [15, 2, 16]]} /></Cell>
                  <Cell $w={24}><Bars rows={[[3, 2, 16], [6, 6, 16], [9, 2, 16], [12, 6, 16], [15, 2, 16]]} /></Cell>
                  <Cell $w={26}>
                    <svg width="17" height="16" viewBox="0 0 17 16" fill="none" stroke="#555"><path d="M.5.5h16v15H.5zM1 5h15M1 11h15" /><path d="M3 8h11" stroke="#2a66ad" strokeWidth="1.4" /></svg>
                  </Cell>
                  <Chevron size={9} $ml={6} />
                </Row>
                <Row $h={23}>
                  <Cell $w={25}><Bars rows={[[3, 2, 16], [6, 8, 16], [9, 8, 16], [12, 8, 16], [15, 2, 16], [9, 2, 6]]} color="#2a66ad" /></Cell>
                  <Cell $w={25}><Bars rows={[[3, 2, 16], [6, 8, 16], [9, 8, 16], [12, 8, 16], [15, 2, 16], [9, 2, 6]]} color="#2a66ad" /></Cell>
                  <RowSep />
                  <TiltedCell $w={34} $fs={10}>ab</TiltedCell>
                  <Chevron size={9} />
                </Row>
              </GroupBody>
              <GroupLabel $pr={18}>Alineación</GroupLabel>
              <Launch />
            </XlGroup>

            <XlGroup $w={106}>
              <GroupBody $pl={10}>
                <Row $h={23}>
                  <Combo $w={88}>General<ComboCaret /></Combo>
                </Row>
                <Row $h={27}>
                  <Cell $w={20} $fs={15}>$</Cell>
                  <Chevron size={9} $ml={4} />
                  <Cell $w={34} $fs={15}>%</Cell>
                  <Cell $w={20} $fs={9}>000</Cell>
                </Row>
                <Row $h={23}>
                  <Cell $w={20} $fs={9} $lh={8}>←,0<br />,00</Cell>
                  <Cell $w={30} $fs={9} $lh={8}>,00<br />→,0</Cell>
                </Row>
              </GroupBody>
              <GroupLabel $pr={18}>Número</GroupLabel>
              <Launch />
            </XlGroup>

            <XlGroup $w={193}>
              <GroupBody $pl={12}>
                <ListLine><TableIcon />Formato condicional<Chevron size={9} $ml={4} /></ListLine>
                <ListLine><TableIcon accent="#999" brush />Dar formato como tabla<Chevron size={9} $ml={4} /></ListLine>
                <ListLine><TableIcon accent="#999" brush />Estilos de celda<Chevron size={9} $ml={4} /></ListLine>
              </GroupBody>
              <GroupLabel>Estilos</GroupLabel>
            </XlGroup>

            <XlGroup $w={109}>
              <GroupBody $pl={12}>
                <ListLine><TableIcon accent="#2f6cb2" />Insertar<Chevron size={9} $ml={10} /></ListLine>
                <ListLine><TableIcon accent="#c43" />Eliminar<Chevron size={9} $ml={8} /></ListLine>
                <ListLine><TableIcon accent="#2f6cb2" />Formato<Chevron size={9} $ml={4} /></ListLine>
              </GroupBody>
              <GroupLabel>Celdas</GroupLabel>
            </XlGroup>

            <XlGroup $w={60}>
              <Big>
                <SearchTile><Search size={17} strokeWidth={3} /></SearchTile>
                Edición
                <Chevron size={9} />
              </Big>
            </XlGroup>

            <XlGroup $w={108}>
              <Big>
                <AddinDot />
                Complementos
              </Big>
              <GroupLabel>Complementos</GroupLabel>
            </XlGroup>
            <Collapse><ChevronUp size={18} /></Collapse>
          </XlRibbon>

          <FormulaRow>
            <NameBox>K15<ComboCaret /></NameBox>
            <FormulaGrip>⋮</FormulaGrip>
            <FxBox>
              <X size={14} /><Check size={14} /><FxMark>fx</FxMark>
            </FxBox>
            <FormulaBox><FormulaChevron size={14} strokeWidth={3} /></FormulaBox>
          </FormulaRow>

          <ColHeads>
            <Corner>
              <svg width="14" height="14" viewBox="0 0 14 14"><path d="M14 0v14H0z" fill="#e2e2e2" /></svg>
            </Corner>
            {COLUMNS.map((c) => (
              <ColHead key={c}>{c}</ColHead>
            ))}
            <ScrollEnd>▲</ScrollEnd>
          </ColHeads>

          <SheetArea>
            <RowHeads>
              {ROW_HEIGHTS.map(([n, h]) => (
                <RowHead key={n} $h={h}>{n}</RowHead>
              ))}
            </RowHeads>
            <Sheet>
              <SheetTitle>Base Geo</SheetTitle>
              <Rule />
              <Fields>
                <FieldLabel>Nombre del proyecto:</FieldLabel>
                <FieldValue>SITIOS CRÍTICOS UF5 - GYC</FieldValue>
                <FieldLabel>subtramo:</FieldLabel>
                <FieldValue>81+550</FieldValue>
              </Fields>
              <ShapeRow $mt={39} $ml={85} $gap={38}>
                <ShapeButton>REGISTRO DE<br />SONDEOS</ShapeButton>
                <ShapeButton>REGISTRO DE<br />MUESTRAS</ShapeButton>
              </ShapeRow>
              <ShapeRow $mt={32} $ml={85} $gap={36}>
                <ShapeButton>REGISTRO DE<br />ENSAYOS</ShapeButton>
                <ShapeButton $mt={4} $size={27}>ESTRATIFICACIÓN</ShapeButton>
              </ShapeRow>
              <ShapeRow $mt={25} $ml={88} $gap={32}>
                <ShapeButton $size={26.5}>CREAR PERFIL</ShapeButton>
                <ShapeButton $mt={1} $size={26.5}>TABLAS RESUMEN</ShapeButton>
              </ShapeRow>
              <ShapeRow $mt={27} $ml={158}>
                <PointsButton $w={489} $size={30}>
                  <svg width="67" height="63" viewBox="0 0 67 63">
                    <ellipse cx="33.5" cy="31.5" rx="33" ry="31" fill="#fff" stroke="#555" />
                    <path d="M11 9l45 45M56 9L11 54" stroke="#555" strokeWidth="1.2" />
                  </svg>
                  Dibujar puntos de perfiles
                </PointsButton>
              </ShapeRow>
            </Sheet>
            <VScroll>
              <VThumb />
              <VDown>▼</VDown>
            </VScroll>
          </SheetArea>

          <SheetTabs>
            <SheetNav><span>‹</span><span>›</span></SheetNav>
            <ActiveSheet>1-INICIO</ActiveSheet>
            <OtherSheet>Hoja1</OtherSheet>
            <AddSheet><Plus size={11} strokeWidth={3} /></AddSheet>
            <HScroll>
              ⋮
              <HBtn $ml={10}>◀</HBtn>
              <HTrack />
              <HBtn $ml={2}>▶</HBtn>
            </HScroll>
          </SheetTabs>

          <XlStatus>
            <StatusChip $w={36} $left>Listo</StatusChip>
            <StatusChip $ml={16}>
              <svg width="15" height="16" viewBox="0 0 15 16" fill="none" stroke="#ddd"><path d="M.5 4.5h12v11H.5zM3 8v5M6 7v6M9 9v4" /><circle cx="11" cy="3" r="2.5" fill="#ddd" /></svg>
            </StatusChip>
            <StatusChip $ml={18} $w={240} $left>
              <svg width="16" height="18" viewBox="0 0 16 18" fill="none" stroke="#e0e0e0"><path d="M4 3a7 7 0 0 0-2 8M10 1L7 7l5 5 2 5M6 17l3-6" /></svg>
              Accesibilidad: es necesario investigar
            </StatusChip>
            <StatusChip $ml={143} $w={204} $left>
              <svg width="16" height="16" viewBox="0 0 16 16"><rect x="1" y="1" width="12" height="10" fill="#e0e0e0" /><circle cx="11" cy="11" r="4" fill="#777" stroke="#ddd" /></svg>
              Configuración de visualización
            </StatusChip>
            <StatusChip $w={41} $active>
              <svg width="15" height="15" viewBox="0 0 15 15" fill="none" stroke="#ddd"><path d="M.5.5h14v14H.5zM5 1v13M10 1v13M1 5h13M1 10h13" /></svg>
            </StatusChip>
            <StatusChip $w={44}>
              <svg width="15" height="17" viewBox="0 0 15 17" fill="none" stroke="#ddd"><path d="M.5.5h14v16H.5zM4 4h7v9H4z" /></svg>
            </StatusChip>
            <StatusChip $w={40}>
              <svg width="16" height="17" viewBox="0 0 16 17" fill="none" stroke="#ddd"><path d="M.5.5h15v16H.5zM6 1v7h4V1" /></svg>
            </StatusChip>
            <StatusChip $ml={8}><Minus size={9} strokeWidth={3} /></StatusChip>
            <ZoomTrack />
            <StatusChip $ml={6}><Plus size={9} strokeWidth={3} /></StatusChip>
            <StatusChip $ml={13}>100%</StatusChip>
          </XlStatus>
        </Excel>

        <Cad>
          <CadTitle>
            <AppMark>C</AppMark>
            <CadSlot $ml={4} $w={8}><Tri /></CadSlot>
            <CadSlot $ml={10}>
              <svg width="18" height="14" viewBox="0 0 18 14"><path d="M0 0h13l5 5v9H0z" fill="#e4e4e4" /></svg>
            </CadSlot>
            <CadSlot $ml={7}>
              <svg width="18" height="15" viewBox="0 0 18 15"><path d="M0 2h6l2 2h8v2H4L0 15z" fill="#e4e4e4" /><path d="M4 7h14l-4 8H1z" fill="#c5c5c5" /></svg>
            </CadSlot>
            <CadSlot $ml={6} $w={11} $fs={9}>▸▸</CadSlot>
            <CadSlot $ml={14} $w={17}><Send size={17} color="#4e9fe3" fill="#4e9fe3" /></CadSlot>
            <CadSlot $ml={4} $w={31} $color="#90b9e0">Share</CadSlot>
            <CadSlot $ml={49} $w={75} $color="#8f96a2">C3D_13 SIG ...</CadSlot>
            <CadSlot $ml={21} $w={6} $fs={8}>▶</CadSlot>
            <KeywordBox>Type a keyword or phrase</KeywordBox>
            <CadSlot $ml={4} $w={16}><Search size={16} color="#b8bcc4" /></CadSlot>
            <CadSlot $ml={9} $w={18}>
              <svg width="18" height="17" viewBox="0 0 18 17"><circle cx="9" cy="5" r="4.5" fill="#6bb7ee" /><path d="M0 17c1-6 5-7 9-7s8 1 9 7z" fill="#6bb7ee" /></svg>
            </CadSlot>
            <CadSlot $ml={5} $w={93}>edwinarevalo8...</CadSlot>
            <CadSlot $ml={0} $w={6}><Tri /></CadSlot>
            <CadSlot $ml={8} $w={15}><ShoppingCart size={15} /></CadSlot>
            <CadSlot $ml={7} $w={18}>
              <svg width="18" height="16" viewBox="0 0 18 16"><path d="M9 1L1 15h16z" fill="none" stroke="#d6d9de" strokeWidth="3" /></svg>
            </CadSlot>
            <CadSlot $ml={4} $w={8}><Tri /></CadSlot>
            <CadSlot $ml={19} $w={18}>
              <svg width="18" height="18" viewBox="0 0 18 18">
                <circle cx="9" cy="9" r="9" fill="#c9ccd1" />
                <text x="9" y="13.5" textAnchor="middle" fontSize="13" fontWeight="700" fill="#5f6570" fontFamily='"Liberation Sans", sans-serif'>?</text>
              </svg>
            </CadSlot>
            <CadSlot $ml={7} $w={8}><Tri /></CadSlot>
            <CadSlot $ml={83} $w={14}><Minus size={14} /></CadSlot>
            <CadSlot $ml={35} $w={11}><Square size={11} /></CadSlot>
            <CadSlot $ml={36} $w={15}><X size={15} /></CadSlot>
          </CadTitle>

          <CadTabs>
            {CAD_TABS.map((t) => (
              <CadTab key={t} $active={t === "Home"}>{t}</CadTab>
            ))}
            <CadSlot $ml={20}>
              <svg width="16" height="7" viewBox="0 0 16 7"><rect width="16" height="7" fill="#e0e0e0" /><path d="M6 5l2-3 2 3z" fill="#555" /></svg>
            </CadSlot>
            <CadSlot $ml={3} $w={8}><Tri /></CadSlot>
          </CadTabs>

          <CadRibbon>
            <DrawPanel $w={236}>
              <DrawTools>
                <LargeTool $w={46}><Line />Line</LargeTool>
                <LargeTool $w={48}><Polyline />Polyline</LargeTool>
                <LargeTool $w={52}><Circle />Circle<ToolTri /></LargeTool>
                <LargeTool $w={46}><Arc />Arc<ToolTri /></LargeTool>
                <ToolGrid $cols="26px 12px">
                  <Tool d="M3 5h14v11H3z" blue="M3 3v2M17 14v3" /><Tri />
                  <Tool d="M2 10a8 5 0 1 0 16 0a8 5 0 1 0-16 0" blue="M9 10h2" /><Tri />
                  <Tool d="M4 4h12v12H4zM1 4h18M1 16h18M4 1v18M16 1v18" blue="M5 15L15 5M5 11l6-6M9 15l6-6" /><Tri />
                </ToolGrid>
              </DrawTools>
              <DrawLabel>Draw <Tri /></DrawLabel>
            </DrawPanel>
            <DrawPanel $w={141}>
              <DrawTools>
                <ToolGrid $cols="30px 32px 26px 14px 30px" $pl={2}>
                  <Tool d="M10 2v16M2 10h16M7 5l3-3 3 3M7 15l3 3 3-3M5 7l-3 3 3 3M15 7l3 3-3 3" />
                  <Tool d="M15 6a7 7 0 1 1-6-2M9 1v6" />
                  <Tool d="M3 3h14M9 3l5 10M11 3L6 13" blue="M8 3v3M12 3v3" /><Tri />
                  <Tool d="M3 17h14" blue="M5 14L15 4" />
                  <Tool d="M3 3h6v5H3zM11 3h6v5" blue="M6 15a3 3 0 1 0 .1 0M13 15a3 3 0 1 0 .1 0" />
                  <Tool d="M10 1v18" blue="M8 5v12H2zM12 5v12h6z" />
                  <Tool d="M3 18V9q0-5 5-5h9" /><Tri />
                  <Tool d="M3 7h11v11H3zM3 7l4-4h11v11l-4 4M14 7l4-4" blue="M7 3v4" />
                  <Tool d="M3 3h6v14H3z" blue="M9 5l6 12H9" />
                  <Tool d="M3 9h8v8H3z" blue="M7 9V3h10v14h-6" />
                  <Tool d="" blue="M3 3h6v6H3zM11 3h6v6h-6zM3 11h6v6H3zM11 11h6v6h-6z" /><Tri />
                  <Tool d="M18 4H7a5 5 0 0 0 0 12h11" blue="M18 8H8a2 2 0 0 0 0 4h10" />
                </ToolGrid>
              </DrawTools>
              <DrawLabel>Modify <Tri /></DrawLabel>
            </DrawPanel>
            <SidePanel $ml={2}>
              <svg width="36" height="36" viewBox="0 0 36 36">
                <path d="M1 13L12 3h15l-8 10zM1 20l11-8h15l-8 8zM1 27l11-8h15l-8 8z" fill="#c9ccd1" stroke="#4a5364" />
                <rect x="22" y="13" width="13" height="23" fill="#e8e8e8" />
                <rect x="24" y="16" width="9" height="8" fill="#5aa9e6" />
                <path d="M25 29h8M25 32h8" stroke="#777" />
              </svg>
              <SideName>Layers</SideName>
              <SideArrow />
            </SidePanel>
            <SidePanel>
              <svg width="36" height="36" viewBox="0 0 36 36">
                <text x="18" y="33" textAnchor="middle" fontSize="38" fill="#d6d9de" fontFamily='"Liberation Sans", sans-serif'>A</text>
              </svg>
              <SideName>Ann...</SideName>
              <SideArrow />
            </SidePanel>
            <SidePanel>
              <svg width="36" height="36" viewBox="0 0 36 36">
                <path d="M18 1h11l5 6v22H18z" fill="#6bb7ee" />
                <rect x="1" y="13" width="23" height="16" fill="#5c6474" stroke="#c9ccd1" strokeWidth="1.5" />
                <circle cx="23" cy="27" r="8" fill="#6f7583" stroke="#c9ccd1" />
              </svg>
              <SideName>Block</SideName>
              <SideArrow />
            </SidePanel>
            <SidePanel>
              <svg width="36" height="36" viewBox="0 0 36 36">
                <rect x="2" y="1" width="22" height="30" fill="#d8d8d8" />
                <rect x="5" y="4" width="16" height="11" fill="#6bb7ee" stroke="#555" />
                <path d="M5 21h8M9 18v6M13 26h7" stroke="#555" />
                <path d="M18 32l8-10 7 5-8 9z" fill="#e9c45c" />
                <path d="M26 22l5-4 4 4-3 5z" fill="#fff" />
              </svg>
              <SideName>Properties</SideName>
              <SideArrow />
            </SidePanel>
            <SidePanel>
              <svg width="36" height="36" viewBox="0 0 36 36">
                <path d="M6 8H2v26h4M26 34h4V24" fill="none" stroke="#d6d9de" strokeWidth="1.3" />
                <rect x="8" y="10" width="11" height="9" fill="#5aa3dc" />
                <circle cx="13" cy="27" r="5" fill="#9a9fa9" />
                <path d="M26 1l2 5 5-2-2 5 5 2-5 2 2 5-5-2-2 5-2-5-5 2 2-5-5-2 5-2-2-5 5 2z" fill="#f5c74e" />
              </svg>
              <SideName>Groups</SideName>
              <SideArrow />
            </SidePanel>
            <SidePanel>
              <svg width="36" height="36" viewBox="0 0 36 36">
                <rect x="2" y="16" width="31" height="7" fill="#ecc663" />
                <path d="M5 16v3M9 16v3M13 16v3M17 16v3M21 16v3M25 16v3M29 16v3" stroke="#8a6f2a" />
              </svg>
              <SideName>Utilities</SideName>
              <SideArrow />
            </SidePanel>
            <SidePanel>
              <svg width="36" height="36" viewBox="0 0 36 36">
                <rect x="5" y="4" width="24" height="30" fill="#d9a566" />
                <rect x="12" y="1" width="10" height="6" fill="#eee" />
                <path d="M14 14h11l6 6v15H14z" fill="#ddd" />
              </svg>
              <SideName>Clipboard</SideName>
              <SideArrow />
            </SidePanel>
          </CadRibbon>

          <DocTabs>
            <DocItem><Menu size={20} /></DocItem>
            <DocItem $ml={25}>Start</DocItem>
            <ActiveDoc>C3D_13 SIG PR81+550_V1*<X size={13} color="#9aa0aa" strokeWidth={3} /></ActiveDoc>
            <DocItem $ml={8}><Plus size={17} color="#e8eaee" strokeWidth={2.5} /></DocItem>
          </DocTabs>
          <DocStrip />

          <Canvas>
            <Profile />
            <ViewTag>[−][Top][2D Wireframe]</ViewTag>
            <ViewControls>
              <Minus size={12} strokeWidth={4} />
              <Copy size={12} strokeWidth={3} />
              <X size={13} strokeWidth={4} />
            </ViewControls>
          </Canvas>

          <Command>
            <CommandGrips>
              <svg width="20" height="6" viewBox="0 0 20 6"><path d="M1 1h18M1 3h18M1 5h18" stroke="#cfd2d8" strokeDasharray="1.5 1" /></svg>
              <X size={13} strokeWidth={3} />
              <Wrench size={16} />
            </CommandGrips>
            <CommandBody>
              <CommandHistory>
                Press ESC or ENTER to exit, or right-click to display shortcut menu.<br />
                Command: *Cancel*
              </CommandHistory>
              <CommandInput>
                <svg width="15" height="14" viewBox="0 0 15 14"><rect x=".5" y=".5" width="14" height="13" fill="#ddd" stroke="#666" /><rect x="1" y="1" width="13" height="3" fill="#777" /></svg>
                <Tri $color="#666" $mr={3} />
                Type a command
              </CommandInput>
            </CommandBody>
          </Command>

          <CadStatus>
            <Menu size={19} />
            <ModelTab>Model</ModelTab>
            <StatusLink $ml={9} $w={16}>PL</StatusLink>
            <StatusLink $ml={22} $w={46}>Layout1</StatusLink>
            <StatusLink $ml={24} $w={18}><Plus size={17} strokeWidth={2.5} /></StatusLink>
            <StatusGroup $ml={72}>
              <StatusBtn $w={49}>MODEL</StatusBtn>
            </StatusGroup>
            <StatusGroup $ml={3}>
              <StatusBtn $w={24}>
                <svg width="17" height="17" viewBox="0 0 17 17" stroke="#cdd1d8"><path d="M5 1v15M11 1v15M1 5h15M1 11h15" /></svg>
              </StatusBtn>
              <StatusBtn $w={28}>
                <svg width="15" height="15" viewBox="0 0 15 15" fill="#cdd1d8"><path d="M2 2h2v2H2zM7 2h2v2H7zM12 2h2v2h-2zM2 7h2v2H2zM7 7h2v2H7zM12 7h2v2h-2zM2 12h2v2H2zM7 12h2v2H7zM12 12h2v2h-2z" /></svg>
              </StatusBtn>
              <StatusBtn $w={16}><Tri /></StatusBtn>
            </StatusGroup>
            <StatusGroup $ml={3}>
              <StatusBtn $w={26}>
                <svg width="16" height="16" viewBox="0 0 16 16" fill="none" stroke="#cdd1d8"><path d="M5 2v6M2 5h6" /><rect x="8" y="10" width="7" height="4" fill="#cdd1d8" /></svg>
              </StatusBtn>
              <StatusBtn $w={25}>
                <svg width="17" height="17" viewBox="0 0 17 17" fill="none" stroke="#cdd1d8"><path d="M2 1v14h14" /><path d="M2 9h5v6" /></svg>
              </StatusBtn>
              <StatusBtn $w={26}>
                <svg width="17" height="17" viewBox="0 0 17 17" fill="none" stroke="#cdd1d8"><circle cx="8" cy="9" r="6" /><path d="M2 9h12l2-6" /></svg>
              </StatusBtn>
              <StatusBtn $w={16}><Tri /></StatusBtn>
              <StatusBtn $w={25}>
                <svg width="16" height="18" viewBox="0 0 16 18" stroke="#cdd1d8"><path d="M4 2l8 14" /><path d="M11 3L6 15" stroke="#c94444" /></svg>
              </StatusBtn>
              <StatusBtn $w={19}><Tri /></StatusBtn>
              <StatusBtn $w={24} $active>
                <svg width="16" height="16" viewBox="0 0 16 16" fill="none" stroke="#fff"><path d="M13 2L2 14h12" /></svg>
              </StatusBtn>
              <StatusBtn $w={2} />
              <StatusBtn $w={24} $active>
                <svg width="17" height="18" viewBox="0 0 17 18" fill="none" stroke="#fff"><path d="M5 4H2v13h13V4h-4M5 1h6v6H5z" /></svg>
              </StatusBtn>
              <StatusBtn $w={16}><Tri /></StatusBtn>
            </StatusGroup>
            <StatusGroup $ml={5}>
              <StatusBtn $w={24}>
                <svg width="16" height="17" viewBox="0 0 16 17" fill="none" stroke="#cdd1d8"><path d="M5 2v13h9M3 4l2-2 2 2M10 9h3M11 6l2 3-2 2" /></svg>
              </StatusBtn>
              <StatusGap $w={4} />
              <StatusBtn $w={23} $active>
                <svg width="16" height="18" viewBox="0 0 16 18" fill="#fff"><path d="M7 1L2 17h3l3-6 3 6h3L9 9l-2-8z" /><circle cx="12" cy="4" r="2.5" fill="none" stroke="#fff" /></svg>
              </StatusBtn>
              <StatusBtn $w={27}>
                <svg width="16" height="18" viewBox="0 0 16 18" fill="#cdd1d8"><path d="M7 2L2 17h3l3-6 3 6h3L9 9l-2-7z" /><path d="M11 1l1 3 3 1-3 1-1 3-1-3-3-1 3-1z" /></svg>
              </StatusBtn>
              <StatusBtn $w={24}>
                <svg width="16" height="18" viewBox="0 0 16 18" fill="#cdd1d8"><path d="M8 1L2 17h3l3-5 3 5h3z" /></svg>
              </StatusBtn>
              <StatusBtn $w={82}>ARGEO-1:100</StatusBtn>
              <StatusBtn $w={15}><Tri /></StatusBtn>
            </StatusGroup>
            <StatusGroup $ml={3}>
              <StatusBtn $w={25}><Settings size={16} fill="#cdd1d8" /></StatusBtn>
              <StatusBtn $w={16}><Tri /></StatusBtn>
            </StatusGroup>
            <StatusGroup $ml={3}>
              <StatusBtn $w={27}><Plus size={19} strokeWidth={2} /></StatusBtn>
              <StatusBtn $w={26}>
                <svg width="16" height="17" viewBox="0 0 16 17" fill="none" stroke="#cdd1d8"><rect x="1" y="1" width="7" height="7" /><circle cx="12" cy="5" r="3" /><path d="M5 10l4 6H1z" /></svg>
              </StatusBtn>
            </StatusGroup>
            <StatusGroup $ml={4}>
              <StatusBtn $w={20}>
                <svg width="14" height="17" viewBox="0 0 14 17"><circle cx="8" cy="8" r="6" fill="#5aa9e6" /></svg>
              </StatusBtn>
              <StatusBtn $w={23}><Menu size={18} /></StatusBtn>
            </StatusGroup>
          </CadStatus>
        </Cad>
      </Desktop>
    </Page>
  );
}
